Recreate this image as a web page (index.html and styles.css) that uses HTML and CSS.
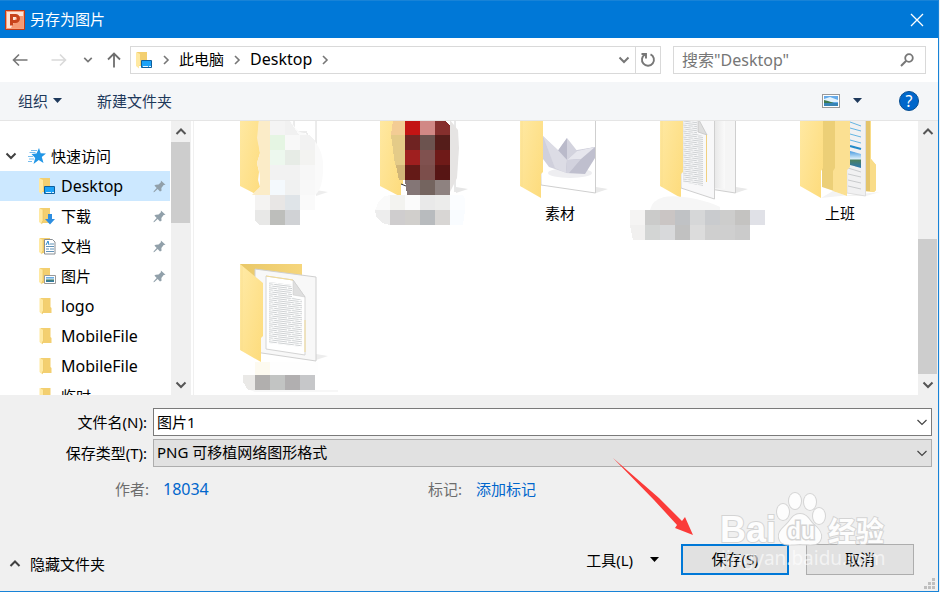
FILE: index.html
```html
<!DOCTYPE html>
<html lang="zh-CN">
<head>
  <meta charset="UTF-8">
  <title>另存为图片</title>
  <link rel="stylesheet" href="styles.css">
</head>
<body>
  <!-- Shared icons -->
  <svg class="defs" aria-hidden="true">
    <defs>
      <linearGradient id="fold" x1="0" y1="0" x2="1" y2="1">
        <stop offset="0" stop-color="#ffeaa6"/>
        <stop offset="1" stop-color="#fddb7b"/>
      </linearGradient>
      <linearGradient id="back" x1="0" y1="0" x2="1" y2="0">
        <stop offset="0" stop-color="#e9c868"/>
        <stop offset="1" stop-color="#f6d67c"/>
      </linearGradient>
      <linearGradient id="shade" x1="0" y1="0" x2="1" y2="0">
        <stop offset="0" stop-color="#dcdcdc"/>
        <stop offset="1" stop-color="#ffffff"/>
      </linearGradient>
      <linearGradient id="sky" x1="0" y1="0" x2="0" y2="1">
        <stop offset="0" stop-color="#4a9be0"/>
        <stop offset="0.45" stop-color="#d8edf8"/>
        <stop offset="0.55" stop-color="#4b8060"/>
        <stop offset="1" stop-color="#2c78b4"/>
      </linearGradient>
      <pattern id="lines" width="37" height="6" patternUnits="userSpaceOnUse" patternTransform="skewY(7)">
        <path d="M0 .5h7M8 .5h12M21 .5h5M27 .5h10M0 2.500h3M4 2.500h11M16 2.500h8M25 2.500h12M0 4.500h10M11 4.500h6M18 4.500h12M31 4.500h6" stroke="#ced1d3" stroke-width="1"/>
      </pattern>
      <symbol id="folder" viewBox="0 0 16 18">
        <path d="M1 1h10v9l1 1v5H1z" fill="#f3cf70"/>
        <path d="M0 1l4 2v11l-1 1v2.500L0 15z" fill="#ffe9a2"/>
        <path d="M4 3v11l-1 1v2" fill="none" stroke="#e8c25c" stroke-width=".6"/>
      </symbol>
      <symbol id="desktop" viewBox="0 0 17 18">
        <path d="M1 1h10v14H1z" fill="#f3cf70"/>
        <path d="M0 1l4 2v11l-1 1v2.500L0 15z" fill="#ffe9a2"/>
        <path d="M5.500 9.500h10v7h-10z" fill="#1ca2f7" stroke="#0f5f9c"/>
        <path d="M7 15.500h5M13 15.500h2" stroke="#e6f5ff"/>
      </symbol>
      <symbol id="chev-down" viewBox="0 0 12 12"><path d="M1.500 3.500L6 8l4.500-4.500" fill="none" stroke="currentColor" stroke-width="2"/></symbol>
      <symbol id="chev-up" viewBox="0 0 12 12"><path d="M1.500 8L6 3.500 10.500 8" fill="none" stroke="currentColor" stroke-width="2"/></symbol>
      <symbol id="chev-right" viewBox="0 0 8 12"><path d="M2 2l4 4-4 4" fill="none" stroke="currentColor" stroke-width="1.600"/></symbol>
      <symbol id="chev-thin" viewBox="0 0 12 12"><path d="M1.500 4L6 8.500 10.500 4" fill="none" stroke="currentColor" stroke-width="1.200"/></symbol>
      <symbol id="caret" viewBox="0 0 10 6"><path d="M0 0h9L4.500 5z" fill="currentColor"/></symbol>
      <symbol id="pin" viewBox="0 0 14 14">
        <path d="M8.500 .5l5 4.500-2 .5-2.500 3 .2 3L7.500 12.500 5 9.800 1.500 13 .5 13.200 .8 12 4 8.700 1.500 6 3 5l3-.2 2.500-2.500z" fill="#91a0aa"/>
      </symbol>
      <symbol id="sheet" viewBox="0 0 140 104">
        <path d="M106 96l12-4-12-2z" fill="#ededed"/>
        <path d="M30 0h62v20H30z" fill="url(#back)"/>
        <path d="M45 5l61 8v84L45 88z" fill="#f8f8f8" stroke="#d0d0d0"/>
        <path d="M56 12l27 4 12 17v58l-39-6z" fill="#fff" stroke="#d4d4d4"/>
        <path d="M59 18l23 3v12l10 3v47l-33-4z" fill="url(#lines)"/>
        <path d="M83 16l12 17-12-2z" fill="#dfdfdf" stroke="#c8c8c8" stroke-width=".5"/>
        <path d="M56 12l27 4M95 56v32" stroke="#f4dc95" fill="none"/>
        <path d="M30 0l23 19v53l-2 2v24L30 86z" fill="url(#fold)"/>
        <path d="M32 2v85" stroke="#f8dc8b" stroke-width=".6"/>
      </symbol>
    </defs>
  </svg>

  <div class="dialog">
    <header class="titlebar">
      <svg class="app-icon" viewBox="0 0 20 20">
        <rect width="20" height="20" rx="1" fill="#c33a15"/>
        <rect x="1" y="1" width="18" height="18" fill="#f5a27e"/>
        <rect x="2" y="2" width="16" height="16" fill="#fde3d7"/>
        <path d="M12 6h6v12H6z" fill="#f59a74"/>
        <path d="M6.500 15.500V5.500H10.500a3 3 0 0 1 0 6H8" fill="none" stroke="#c8431b" stroke-width="3"/>
      </svg>
      <h1>另存为图片</h1>
      <button class="close" aria-label="关闭">
        <svg viewBox="0 0 14 14"><path d="M1 1l12 12M13 1L1 13" stroke="#fff" stroke-width="1.300"/></svg>
      </button>
    </header>

    <nav class="navbar">
      <button class="nav-btn" aria-label="后退"><svg viewBox="0 0 16 14"><path d="M15.500 7H1.500M7 1.500L1.500 7 7 12.500" fill="none" stroke="#777" stroke-width="1.600"/></svg></button>
      <button class="nav-btn forward" aria-label="前进"><svg viewBox="0 0 16 14"><path d="M.5 7h14M9 1.500L14.500 7 9 12.500" fill="none" stroke="#d9d9d9" stroke-width="1.600"/></svg></button>
      <button class="nav-btn recent" aria-label="最近的位置"><svg viewBox="0 0 12 12"><use href="#chev-down"/></svg></button>
      <button class="nav-btn up" aria-label="上移"><svg viewBox="0 0 14 16"><path d="M7 15.500V1.500M1 7.500l6-6 6 6" fill="none" stroke="#6e6e6e" stroke-width="1.800"/></svg></button>
      <div class="address">
        <svg class="address-icon"><use href="#desktop"/></svg>
        <svg class="sep"><use href="#chev-right"/></svg>
        <a href="#">此电脑</a>
        <svg class="sep"><use href="#chev-right"/></svg>
        <a href="#" class="latin">Desktop</a>
        <svg class="sep"><use href="#chev-right"/></svg>
        <button class="history" aria-label="以前的位置"><svg><use href="#chev-down"/></svg></button>
        <button class="refresh" aria-label="刷新">
          <svg viewBox="0 0 16 16"><path d="M10.500 2.300a6 6 0 1 1-5.500.2M1.500 2h4.500v4.500" fill="none" stroke="#777" stroke-width="1.900"/></svg>
        </button>
      </div>
      <div class="search">
        <input type="text" placeholder='搜索"Desktop"' aria-label="搜索">
        <svg viewBox="0 0 14 14"><circle cx="9" cy="5" r="3.800" fill="none" stroke="#777" stroke-width="1.800"/><path d="M6.200 7.800L1 13" stroke="#777" stroke-width="2"/></svg>
      </div>
    </nav>

    <div class="toolbar">
      <button>组织 <svg class="caret"><use href="#caret"/></svg></button>
      <button class="new-folder">新建文件夹</button>
      <button class="view" aria-label="更改视图">
        <svg class="view-icon" viewBox="0 0 18 14"><rect x=".5" y=".5" width="17" height="13" fill="#fff" stroke="#999"/><rect x="2" y="2" width="14" height="10" fill="#66abe9"/><path d="M2 5l6-2 8 3v2H2z" fill="#e3f3fd"/><path d="M2 6l4 1 6 2H2z" fill="#3f7a4c"/><path d="M2 9h14v3H2z" fill="#3784b5"/></svg>
        <svg class="caret"><use href="#caret"/></svg>
      </button>
      <button class="help" aria-label="帮助">?</button>
    </div>

    <main class="browser">
      <aside class="tree">
        <ul>
          <li><a href="#" class="root">
            <svg class="expand"><use href="#chev-down"/></svg>
            <svg class="star" viewBox="0 0 18 16"><path d="M11 0l1.700 5.200L18 5.500l-4.200 3.600 1.700 6-4.800-3.200L5.500 16l1.700-6L3.500 6l5-.5z" fill="#2196e6"/><path d="M3 2.500h6M1.500 4.500h6M0 8.500h5M1 11h5M0 13.500h4" stroke="#68b5ec" stroke-width=".9"/></svg>
            快速访问</a></li>
          <li><a href="#" class="selected latin"><svg class="icon"><use href="#desktop"/></svg><span>Desktop</span><svg class="pin"><use href="#pin"/></svg></a></li>
          <li><a href="#"><svg class="icon" viewBox="0 0 17 18"><use href="#folder" width="16" height="18"/><path d="M9 7h4v5h3l-5 5.500L6 12h3z" fill="#2e8ee0"/></svg><span>下载</span><svg class="pin"><use href="#pin"/></svg></a></li>
          <li><a href="#"><svg class="icon" viewBox="0 0 17 18"><use href="#folder" width="16" height="18"/><path d="M5.500 2.500h8l2.500 2.500v12H5.500z" fill="#fff" stroke="#8a8f94"/><path d="M7 9.500h8M7 12h3M11 12h4M7 14.500h8M11 7h4" stroke="#5f91b7"/><path d="M7 8l2-4 1 4" fill="none" stroke="#2586cc"/></svg><span>文档</span><svg class="pin"><use href="#pin"/></svg></a></li>
          <li><a href="#"><svg class="icon" viewBox="0 0 17 18"><use href="#folder" width="16" height="18"/><path d="M5.500 8.500h11v8h-11z" fill="#fff" stroke="#999"/><path d="M7 10h8v5H7z" fill="url(#sky)"/></svg><span>图片</span><svg class="pin"><use href="#pin"/></svg></a></li>
          <li><a href="#" class="latin"><svg class="icon"><use href="#folder"/></svg><span>logo</span></a></li>
          <li><a href="#" class="latin"><svg class="icon"><use href="#folder"/></svg><span>MobileFile</span></a></li>
          <li><a href="#" class="latin"><svg class="icon"><use href="#folder"/></svg><span>MobileFile</span></a></li>
          <li><a href="#"><svg class="icon"><use href="#folder"/></svg><span>临时</span></a></li>
        </ul>
      </aside>
      <div class="scrollbar">
        <svg><use href="#chev-up"/></svg>
        <div class="track"><div class="thumb thumb-tree"></div></div>
        <svg><use href="#chev-down"/></svg>
      </div>

      <section class="files">
        <div class="grid">
          <!-- names of some folders are masked -->
          <figure>
            <svg viewBox="0 0 140 104">
              <path d="M106 96l12-4-12-2z" fill="#ededed"/>
              <path d="M84 0v33M97 33V45M106 0v92M84 32h13" stroke="#d8d8d8" fill="none"/>
              <path d="M30 0h23v98L30 86z" fill="url(#fold)"/>
              <path d="M49 20h28q4 0 7 6 3 6 10 7 11 5 15 15 5 9 4 24-1 18-8 23v15H45V95h-3l8-8-2-7 1-8-2-9 3-10-2-15z" fill="#fafafa"/>
              <path d="M49 20h11v75H42l8-8 0-12-3-12 3-10-3-15z" fill="#fbecc8"/>
              <g shape-rendering="crispEdges">
                <path d="M60 20h15v15H60z" fill="#f4f4f4"/><path d="M75 20h4l10 15H75z" fill="#f1f1f1"/>
                <path d="M60 35h15v15H60z" fill="#e5f5e3"/><path d="M75 35h15v15H75z" fill="#f8f8f8"/><path d="M90 35h9l6 6v9H90z" fill="#f2f2f2"/>
                <path d="M60 50h15v15H60z" fill="#edf8ee"/><path d="M75 50h15v15H75z" fill="#e7ece6"/><path d="M90 50h15v15H90z" fill="#f3f3f1"/>
                <path d="M60 65h30v15H60z" fill="#f2f2f2"/><path d="M90 65h15v15H90z" fill="#f7f7f7"/>
                <path d="M60 80h15v15H60z" fill="#f4f9fd"/><path d="M75 80h15v15H75z" fill="#f0f1f1"/><path d="M90 80h15v15H90z" fill="#f8f8f8"/>
                <path d="M45 95h15v15H45z" fill="#f4f3f2"/><path d="M60 95h15v15H60z" fill="#e8e6e5"/><path d="M75 95h15v15H75z" fill="#dfe4e8"/>
                <path d="M45 110h15v15H49l-4-5z" fill="#e8e8e7"/><path d="M60 110h15v15H60z" fill="#bdbebb"/><path d="M75 110h15v15H75z" fill="#d0d2d5"/>
              </g>
            </svg>
          </figure>
          <figure>
            <svg viewBox="0 0 140 104">
              <path d="M106 93l12-4-12-2z" fill="#e6e6e6"/>
              <path d="M105 0v92" stroke="#d0d0d0"/>
              <path d="M30 0h23v98L30 86z" fill="url(#fold)"/>
              <path d="M100 20l8 10 1 18-2 30-7 14z" fill="#e6e4e3"/>
              <path d="M51 84l5 2v9h-5z" fill="#fff"/><path d="M51 84l5 2" stroke="#333"/>
              <g shape-rendering="crispEdges">
                <path d="M43 20h12v15H41z" fill="#f3cc94"/><path d="M55 20h15v15H55z" fill="#c31414"/><path d="M70 20h15v15H70z" fill="#d18885"/><path d="M85 20h10l5 6v9H85z" fill="#852f2d"/>
                <path d="M41 35h14v30H45z" fill="#e4cb88"/><path d="M55 35h15v15H55z" fill="#6f2322"/><path d="M70 35h15v15H70z" fill="#6c534f"/><path d="M85 35h15v15H85z" fill="#551d1a"/>
                <path d="M55 50h15v15H55z" fill="#9f1f1f"/><path d="M70 50h15v15H70z" fill="#80514f"/><path d="M85 50h15v15H85z" fill="#6f1a18"/>
                <path d="M46 65h9v15h-6z" fill="#d1b678"/><path d="M55 65h15v15H55z" fill="#641a17"/><path d="M70 65h15v15H70z" fill="#7c4e4b"/><path d="M85 65h15v15H85z" fill="#571514"/>
                <path d="M55 80h15v15H57z" fill="#847676"/><path d="M70 80h15v15H70z" fill="#74645f"/><path d="M85 80h15v15H85z" fill="#8e8280"/>
                <path d="M40 95v15H25l4-9 6-5z" fill="#fafafa"/><path d="M40 95h15v15H40z" fill="#f3f3f0"/><path d="M55 95h15v15H55z" fill="#fbfbfb"/><path d="M70 95h15v15H70z" fill="#e9e9e9"/><path d="M85 95h15v15H85z" fill="#ececeb"/><path d="M100 95h13l2 4v11h-15z" fill="#fbfdff"/>
                <path d="M25 110h15v15l-8-2-6-7z" fill="#ededed"/><path d="M40 110h15v15H40z" fill="#cfcdce"/><path d="M55 110h15v15H55z" fill="#d1cfcc"/><path d="M70 110h15v15H70z" fill="#b8bbbe"/><path d="M85 110h15v15H85z" fill="#d8d6d4"/><path d="M100 110h15l-2 15h-13z" fill="#f9fcff"/>
              </g>
            </svg>
          </figure>
          <figure>
            <svg viewBox="0 0 140 104">
              <path d="M106 93l12-4-12-2z" fill="#e9e9e9"/>
              <path d="M50 0h55.500v93L51 85z" fill="#fff" stroke="#cfcfcf"/>
              <ellipse cx="80" cy="73" rx="22" ry="5" fill="#eeeef1"/>
              <path d="M53 36l14 14h20l18-3v10L95 73H77L59 67l-6-8z" fill="#d0d0dc"/>
              <path d="M77 38l11 14-11 8-10-8z" fill="#d3d3de"/><path d="M77 38v22l-10-8z" fill="#babaca"/>
              <path d="M53 36l14 13 10 11-1 13-11-5z" fill="#dcdce5"/>
              <path d="M105 47L87 51 77 60l-1 13 19 1 10-16z" fill="#bfbfce"/>
              <path d="M105 47L87 51l-10 9 14-1z" fill="#e6e6ed"/>
              <path d="M77 60l14-1-12 14-3 0z" fill="#d2d2de"/>
              <path d="M30 0h23v72l-2 2v24L30 86z" fill="url(#fold)"/>
              <path d="M32 2v85" stroke="#f8dc8b" stroke-width=".6"/>
            </svg>
            <figcaption>素材</figcaption>
          </figure>
          <figure>
            <svg viewBox="0 0 140 104">
              <path d="M106 93l12-4-12-2z" fill="#e9e9e9"/>
              <path d="M80 0h25.500v93L80 89z" fill="#f5f5f5" stroke="#cfcfcf"/>
              <path d="M50 0h34.500v99L51 88z" fill="#f8f8f9" stroke="#cfcfcf"/>
              <path d="M85 0h10v89l-10-1z" fill="url(#shade)" opacity=".5"/>
              <path d="M53 20h14v14l6 2v50l-20-4z" fill="url(#lines)"/>
              <path d="M68 18l9 17-9-3z" fill="#dedede" stroke="#bbb" stroke-width=".6"/>
              <path d="M76.500 35v47" stroke="#f0d080" fill="none"/>
              <path d="M30 0h23v72l-2 2v24L30 86z" fill="url(#fold)"/>
              <path d="M32 2v85" stroke="#f8dc8b" stroke-width=".6"/>
              <path d="M0 110h20q2-10 14-13 12-2 32 2 14 3 24 8v4z" fill="#f6f6f6"/>
              <g shape-rendering="crispEdges">
                <path d="M0 110h15v15H0z" fill="#f5f4f3"/><path d="M15 110h15v15H15z" fill="#cbcbca"/><path d="M30 110h15v15H30z" fill="#cac5c4"/><path d="M45 110h15v15H45z" fill="#c0c2c5"/><path d="M60 110h15v15H60z" fill="#d6d7d8"/><path d="M75 110h15v15H75z" fill="#c9cbce"/><path d="M90 110h15v15H90z" fill="#cdcdcc"/><path d="M105 110h15v15h-15z" fill="#c4c3c1"/><path d="M120 110h15v15h-15z" fill="#e0e1e7"/>
                <path d="M0 125h15v15H3z" fill="#f1f0ef"/><path d="M15 125h15v15H15z" fill="#d3d5d4"/><path d="M30 125h15v15H30z" fill="#d8d9db"/><path d="M45 125h15v15H45z" fill="#c1c1c1"/><path d="M60 125h15v15H60z" fill="#dcdcdc"/><path d="M75 125h30v15H75z" fill="#cfcfcf"/><path d="M105 125h15v15h-15z" fill="#cbcbcb"/>
              </g>
            </svg>
          </figure>
          <figure>
            <svg viewBox="0 0 140 104">
              <path d="M51 98l12-7 14 5 19 0 14-4z" fill="#f3f3f3"/>
              <path d="M92 0h9v59l5 6v25l-2 2-12-1z" fill="#f5d67d"/>
              <path d="M96 0h5v59l5 6v25l-2 2-8-1z" fill="#f9dc88"/><path d="M96 0h4v91h-4z" fill="#e4c46b"/>
              <path d="M76 0h19.500v96L77 93z" fill="#f1f1f2" stroke="#ddd"/>
              <path d="M80 22l11 4M80 28l11 3M80 34l11 3M80 40l11 3" stroke="#65b5e2"/>
              <path d="M80 46l11 3" stroke="#238bc9" stroke-width="2"/>
              <path d="M80 51l11 3v14l-11-3z" fill="url(#sky)"/>
              <path d="M78 68l13 4M78 74l13 3M78 80l13 3M78 86l13 3" stroke="#c9cbcd"/>
              <path d="M52 0h15v92l-15-5z" fill="#eccf77"/>
              <path d="M65 0h15v67l-3 3v26l-14-5V71l2-3z" fill="#fbe092"/>
              <path d="M30 0h23v68l-2 3v27L30 86z" fill="url(#fold)"/>
            </svg>
            <figcaption>上班</figcaption>
          </figure>
          <figure>
            <svg viewBox="0 0 140 104">
              <use href="#sheet" width="140" height="104"/>
              <path d="M45 98h63v13H45z" fill="#fefefe"/><path d="M45 98h15v13H45z" fill="#fdfaf0"/>
              <path d="M40 126h88v2H45z" fill="#f7f7f7"/>
              <g shape-rendering="crispEdges">
                <path d="M33 111h12v15h-7l-5-8z" fill="#eae9e7"/><path d="M45 111h15v15H45z" fill="#b1afae"/><path d="M60 111h15v15H60z" fill="#c2c4c3"/><path d="M75 111h15v15H75z" fill="#b1afb0"/><path d="M90 111h15v15H90z" fill="#c6c7c9"/>
              </g>
            </svg>
          </figure>
        </div>
      </section>
      <div class="scrollbar">
        <svg><use href="#chev-up"/></svg>
        <div class="track"><div class="thumb thumb-files"></div></div>
        <svg><use href="#chev-down"/></svg>
      </div>
    </main>

    <form class="panel">
      <div class="field">
        <label for="filename">文件名(N):</label>
        <div class="combo">
          <input type="text" id="filename" value="图片1">
          <svg><use href="#chev-thin"/></svg>
        </div>
      </div>
      <div class="field">
        <label for="filetype">保存类型(T):</label>
        <div class="combo">
          <select id="filetype"><option>PNG 可移植网络图形格式</option></select>
          <svg><use href="#chev-thin"/></svg>
        </div>
      </div>
      <div class="meta">
        <div class="meta-item"><span class="meta-label">作者:</span><a href="#" class="latin">18034</a></div>
        <div class="meta-item"><span>标记:</span><a href="#">添加标记</a></div>
      </div>
      <div class="actions">
        <button type="button" class="hide-folders"><svg><use href="#chev-up"/></svg>隐藏文件夹</button>
        <button type="button" class="tools">工具(L)<svg class="caret"><use href="#caret"/></svg></button>
        <button type="button" class="btn primary">保存(S)</button>
        <button type="button" class="btn">取消</button>
      </div>
    </form>

    <svg class="overlay" viewBox="0 0 280 125" aria-hidden="true">
      <path d="M3 3l46 40 23 23 3-4 8 18-18-7 2-3-23-25z" fill="#fb3b39"/>
      <g class="mark">
        <text x="110" y="87" class="mark-bai">Bai</text>
        <ellipse cx="173" cy="57" rx="6" ry="8"/>
        <ellipse cx="185" cy="46" rx="6" ry="8"/>
        <ellipse cx="200" cy="47" rx="6" ry="8"/>
        <ellipse cx="209" cy="61" rx="6" ry="8"/>
        <path d="M190 59c7 0 9 6 13 10 6 5 9 9 8 14-2 8-9 7-21 6-12 1-19 2-21-6-1-6 3-9 8-14 4-4 6-10 13-10z"/>
        <text x="177" y="84" class="mark-du">du</text>
        <text x="218" y="87" class="mark-cn">经验</text>
      </g>
      <text x="111" y="110" class="mark-url">jingyan.baidu.com</text>
    </svg>
    <svg class="grip" viewBox="0 0 12 12"><path d="M8 0h3v3H8zM4 4h3v3H4zM8 4h3v3H8zM0 8h3v3H0zM4 8h3v3H4zM8 8h3v3H8z" fill="#bfbfbf"/></svg>
  </div>
</body>
</html>
```
FILE: styles.css
```css
* {
  box-sizing: border-box;
}

body {
  margin: 0;
  padding-right: 1px;
  background: #e6f1fa;
  font-family: "Noto Sans", "Noto Sans CJK SC", sans-serif;
  font-size: 15px;
  line-height: 20px;
  color: #000;
}

button, input, select {
  font: inherit;
  color: inherit;
}

button {
  display: flex;
  align-items: center;
  padding: 0;
  border: none;
  background: none;
}

a {
  color: inherit;
  text-decoration: none;
}

svg {
  display: block;
  flex: none;
}

.defs {
  position: absolute;
  width: 0;
  height: 0;
}

.latin {
  font-size: 16px;
}

.caret {
  width: 10px;
  height: 6px;
}

.dialog {
  position: relative;
  display: flex;
  flex-direction: column;
  height: 100vh;
  border-right: 1px solid #1883d7;
  border-bottom: 1px solid #1883d7;
  background: #fff;
}

/* Title bar */
.titlebar {
  display: flex;
  align-items: center;
  height: 38px;
  padding: 0 14px 0 5px;
  border-top: 1px solid #1883d7;
  background: #0078d7;
  color: #fff;
}

.titlebar h1 {
  flex: 1;
  margin: 0 0 0 5px;
  padding-bottom: 2px;
  font-size: 15px;
  font-weight: normal;
}

.app-icon {
  width: 20px;
  height: 20px;
}

.close svg {
  width: 14px;
  height: 14px;
}

/* Navigation */
.navbar {
  display: flex;
  align-items: center;
  height: 44px;
  padding: 0 12px;
}

.nav-btn svg {
  width: 16px;
  height: 14px;
}

.forward {
  margin-left: 23px;
}

.recent {
  margin-left: 16px;
  color: #777;
}

.recent svg {
  width: 10px;
  height: 10px;
}

.up {
  margin: 0 9px 0 14px;
}

.up svg {
  width: 14px;
  height: 16px;
}

.address, .search {
  display: flex;
  align-items: center;
  height: 28px;
  border: 1px solid #d9d9d9;
}

.address {
  flex: 1;
  padding-left: 5px;
}

.address a {
  padding-bottom: 2px;
}

.address-icon {
  width: 17px;
  height: 18px;
}

.sep {
  width: 8px;
  height: 12px;
  margin: 0 9px;
  color: #777;
}

.history {
  margin-left: auto;
  padding: 0 5px;
  color: #777;
}

.history svg {
  width: 12px;
  height: 12px;
}

.refresh {
  height: 100%;
  padding: 0 4px;
  border-left: 1px solid #d9d9d9;
}

.refresh svg {
  width: 16px;
  height: 16px;
}

.search {
  flex: 0 0 253px;
  width: 253px;
  min-width: 0;
  margin-left: 12px;
  padding: 0 11px 0 8px;
}

.search input {
  flex: 1;
  width: 100%;
  min-width: 0;
  padding: 0;
  border: none;
  outline: none;
  font-size: 16px;
}

.search input::placeholder {
  color: #767676;
}

.search svg {
  width: 14px;
  height: 14px;
}

/* Toolbar */
.toolbar {
  display: flex;
  align-items: center;
  height: 39px;
  padding: 0 19px 0 18px;
  border-bottom: 1px solid #e5e5e5;
  background: #f4f6f8;
  color: #1e395b;
}

.toolbar .caret {
  margin-left: 5px;
}

.new-folder {
  margin-left: 34px;
}

.view {
  margin-left: auto;
}

.toolbar .view .caret {
  margin-left: 13px;
}

.view-icon {
  width: 18px;
  height: 14px;
}

.help {
  justify-content: center;
  width: 20px;
  height: 20px;
  margin-left: 36px;
  border: 1px solid #074e91;
  border-radius: 50%;
  background: #0067cb;
  color: #fff;
  font-size: 16px;
}

/* Browser area */
.browser {
  display: flex;
  flex: 1;
  min-height: 0;
}

.tree {
  width: 171px;
  padding: 20px 1px 0 0;
  overflow: hidden;
}

.tree ul {
  margin: 0;
  padding: 0;
  list-style: none;
}

.tree a {
  display: flex;
  align-items: center;
  height: 30px;
  padding: 0 4px 0 39px;
}

.tree a.root {
  padding-left: 5px;
}

.tree .selected {
  background: #cce8ff;
}

.expand {
  width: 12px;
  height: 12px;
  margin-right: 11px;
  color: #404040;
}

.star {
  width: 18px;
  height: 16px;
  margin-right: 5px;
}

.icon {
  width: 17px;
  height: 18px;
  margin-right: 5px;
}

.pin {
  width: 13px;
  height: 13px;
  margin-left: auto;
}

.scrollbar {
  display: flex;
  flex-direction: column;
  align-items: center;
  width: 20px;
  background: #f0f0f0;
  color: #555;
}

.scrollbar svg {
  width: 12px;
  height: 12px;
  margin: 5px 0 4px;
}

.track {
  position: relative;
  flex: 1;
  width: 100%;
}

.thumb {
  position: absolute;
  left: 0;
  right: 1px;
  background: #cdcdcd;
}

.thumb-tree {
  top: 0;
  height: 35%;
}

.thumb-files {
  bottom: 0;
  height: 58%;
}

.files {
  flex: 1;
  min-width: 0;
  margin-left: 2px;
  padding-left: 16px;
  border-left: 1px solid #f0f0f0;
  overflow: hidden;
}

/* the list is scrolled down a little */
.grid {
  display: grid;
  grid-template-columns: repeat(auto-fill, 140px);
  grid-auto-rows: 164px;
  margin-top: -21px;
}

.grid figure {
  margin: 0;
}

.grid svg {
  width: 140px;
  height: 104px;
  overflow: visible;
}

.grid figcaption {
  line-height: 18px;
  text-align: center;
}

/* Bottom panel */
.panel {
  padding: 13px 6px 16px 0;
  background: #f0f0f0;
}

.field {
  display: flex;
  align-items: center;
  gap: 6px;
  margin-bottom: 3px;
}

.field label {
  width: 147px;
  text-align: right;
}

.combo {
  position: relative;
  flex: 1;
}

.combo input, .combo select {
  display: block;
  width: 100%;
  height: 28px;
  padding: 0 24px 2px 3px;
  border: 1px solid #7a7a7a;
  border-radius: 0;
  background: #fff;
  appearance: none;
}

.combo select {
  border-color: #adadad;
  background: #e1e1e1;
}

.combo svg {
  position: absolute;
  top: 8px;
  right: 4px;
  width: 12px;
  height: 12px;
  color: #444;
  pointer-events: none;
}

.meta {
  display: grid;
  grid-template-columns: 428px 1fr;
  margin-top: 8px;
  color: #6d6d6d;
}

.meta-item {
  display: flex;
  align-items: center;
  gap: 14px;
  height: 28px;
}

.meta-label {
  width: 149px;
  text-align: right;
}

.meta a {
  color: #0066cc;
}

.actions {
  display: flex;
  align-items: center;
  gap: 17px;
  margin-top: 41px;
  padding: 0 18px 0 9px;
}

.hide-folders {
  margin: 8px auto 0 0;
}

.hide-folders svg {
  width: 12px;
  height: 12px;
  margin-right: 9px;
  color: #404040;
}

.tools {
  margin-right: 4px;
}

.tools .caret {
  margin-left: 17px;
}

.btn {
  justify-content: center;
  width: 108px;
  height: 31px;
  padding-bottom: 2px;
  border: 1px solid #adadad;
  background: #e1e1e1;
}

.btn.primary {
  border: 2px solid #0078d7;
}

.grip {
  position: absolute;
  right: 2px;
  bottom: 1px;
  width: 12px;
  height: 12px;
}

/* Arrow and watermark on top of the dialog */
.overlay {
  position: absolute;
  right: 48px;
  bottom: 11px;
  width: 280px;
  height: 125px;
  pointer-events: none;
}

.mark {
  fill: #fff;
  stroke: #d2d2d2;
  stroke-width: 2px;
  paint-order: stroke;
  opacity: 0.9;
}

.mark-bai {
  font: bold 36px "Liberation Sans", sans-serif;
}

.mark-du {
  font: bold 23px "Liberation Sans", sans-serif;
  stroke-width: 3px;
}

.mark-cn {
  font: bold 28px "Noto Sans CJK SC", sans-serif;
}

.mark-url {
  font-size: 19px;
  fill: #fff;
  opacity: 0.6;
}
```
